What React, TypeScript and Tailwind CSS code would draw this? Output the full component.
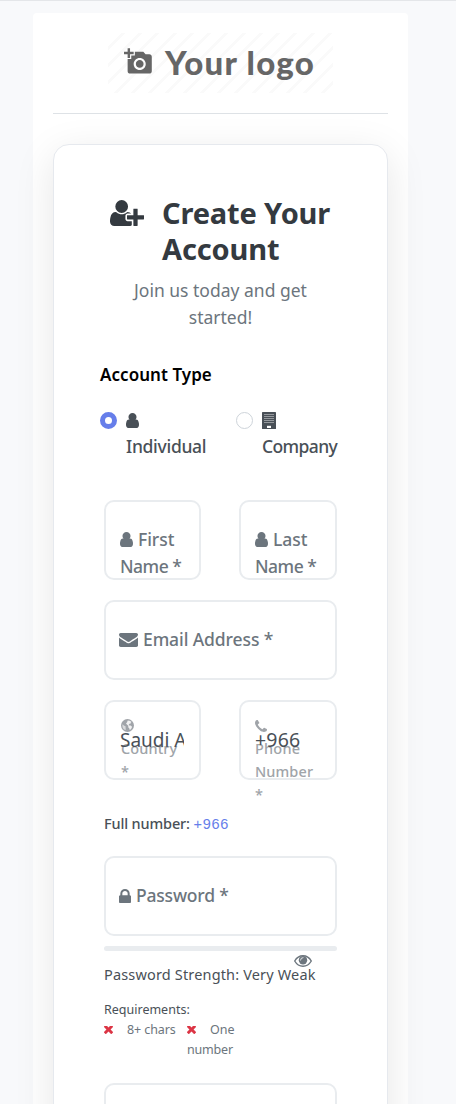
import type { ReactNode } from "react";
import { MdAddAPhoto } from "react-icons/md";

const PATHS = {
  user: "M1536 1330q0 140-62.5 237t-150.5 97h-854q-88 0-150.5-97t-62.5-237q0-60 8.5-140t31.5-152 58.5-131 94-89 120-24q140 112 327 112t327-112q62 0 120 24t94 89 58.5 131 31.5 152 8.5 140zm-242-800q0 168-116.5 284.5t-281.5 116.5-281.5-116.5-116.5-284.5 116.5-285 281.5-117 281.5 117 116.5 285z",
  userPlus:
    "M704 896q-159 0-271.5-112.5t-112.5-271.5 112.5-271.5 271.5-112.5 271.5 112.5 112.5 271.5-112.5 271.5-271.5 112.5zm960 128h352q13 0 22.5 9.5t9.5 22.5v192q0 13-9.5 22.5t-22.5 9.5h-352v352q0 13-9.5 22.5t-22.5 9.5h-192q-13 0-22.5-9.5t-9.5-22.5v-352h-352q-13 0-22.5-9.5t-9.5-22.5v-192q0-13 9.5-22.5t22.5-9.5h352v-352q0-13 9.5-22.5t22.5-9.5h192q13 0 22.5 9.5t9.5 22.5v352zm-736 224q0 52 38 90t90 38h256v238q-68 50-171 50h-874q-121 0-194-69t-73-190q0-53 3.5-103.5t14-109 26.5-108.5 43-97.5 62-81 85.5-53.5 111.5-20q19 0 39 17 79 61 154.5 91.5t164.5 30.5 164.5-30.5 154.5-91.5q20-17 39-17 132 0 217 96h-223q-52 0-90 38t-38 90v192z",
  envelope:
    "M1792 710v794q0 66-47 113t-113 47h-1472q-66 0-113-47t-47-113v-794q44 49 101 87 362 246 497 345 57 42 92.5 65.5t94.5 48 110 24.5h2q51 0 110-24.5t94.5-48 92.5-65.5q170-123 498-345 57-39 100-87zm0-294q0 79-49 151t-122 123q-376 261-468 325-10 7-42.5 31t-54 38.5-52 32.5-57.5 27-50 9h-2q-23 0-50-9t-57.5-27-52-32.5-54-38.5-42.5-31q-91-64-262-182.5t-205-142.5q-62-42-117-115.5t-55-136.5q0-78 41.5-130t118.5-52h1472q65 0 112.5 47t47.5 113z",
  phone:
    "M1600 1240q0 27-10 70.5t-21 68.5q-21 50-122 106-94 51-186 51-27 0-53-3.5t-57.5-12.5-47-14.5-55.5-20.5-49-18q-98-35-175-83-127-79-264-216t-216-264q-48-77-83-175-3-9-18-49t-20.5-55.5-14.5-47-12.5-57.5-3.5-53q0-92 51-186 56-101 106-122 25-11 68.5-21t70.5-10q14 0 21 3 18 6 53 76 11 19 30 54t35 63.5 31 53.5q3 4 17.5 25t21.5 35.5 7 28.5q0 20-28.5 50t-62 55-62 53-28.5 46q0 9 5 22.5t8.5 20.5 14 24 11.5 19q76 137 174 235t235 174q2 1 19 11.5t24 14 20.5 8.5 22.5 5q18 0 46-28.5t53-62 55-62 50-28.5q14 0 28.5 7t35.5 21.5 25 17.5q25 15 53.5 31t63.5 35 54 30q70 35 76 53 3 7 3 21z",
  lock: "M640 768h512v-192q0-106-75-181t-181-75-181 75-75 181v192zm832 96v576q0 40-28 68t-68 28h-960q-40 0-68-28t-28-68v-576q0-40 28-68t68-28h32v-192q0-184 132-316t316-132 316 132 132 316v192h32q40 0 68 28t28 68z",
  eye: "M1664 960q-152-236-381-353 61 104 61 225 0 185-131.5 316.5t-316.5 131.5-316.5-131.5-131.5-316.5q0-121 61-225-229 117-381 353 133 205 333.5 326.5t434.5 121.5 434.5-121.5 333.5-326.5zm-720-384q0-20-14-34t-34-14q-125 0-214.5 89.5t-89.5 214.5q0 20 14 34t34 14 34-14 14-34q0-86 61-147t147-61q20 0 34-14t14-34zm848 384q0 34-20 69-140 230-376.5 368.5t-499.5 138.5-499.5-139-376.5-368q-20-35-20-69t20-69q140-229 376.5-368t499.5-139 499.5 139 376.5 368q20 35 20 69z",
  times:
    "M1490 1322q0 40-28 68l-136 136q-28 28-68 28t-68-28l-294-294-294 294q-28 28-68 28t-68-28l-136-136q-28-28-28-68t28-68l294-294-294-294q-28-28-28-68t28-68l136-136q28-28 68-28t68 28l294 294 294-294q28-28 68-28t68 28l136 136q28 28 28 68t-28 68l-294 294 294 294q28 28 28 68z",
};

function Glyph({ name, box, className }: { name: keyof typeof PATHS; box: string; className: string }) {
  return (
    <svg viewBox={box} preserveAspectRatio="none" className={`shrink-0 ${className}`} fill="currentColor" aria-hidden="true">
      <path d={PATHS[name]} />
    </svg>
  );
}

const USER_BOX = "256 128 1280 1536";

function Building() {
  const cols = [3, 5, 7, 9, 11];
  const rows = [2.5, 4.5, 6.5, 8.5, 10.5];
  return (
    <svg viewBox="0 0 14 17" className="h-[17px] w-[14px]" aria-hidden="true">
      <rect width="14" height="17" rx="0.6" fill="currentColor" />
      {rows.map((y) => cols.map((x) => <rect key={`${x}-${y}`} x={x - 0.5} y={y - 0.5} width="1" height="1" fill="#fff" fillOpacity="0.85" />))}
      <rect x="5" y="13.8" width="4" height="2.2" fill="#fff" />
    </svg>
  );
}

function Globe() {
  return (
    <svg viewBox="0 0 14 14" className="h-[13px] w-[13px]" aria-hidden="true">
      <circle cx="7" cy="7" r="7" fill="currentColor" />
      <path d="M7.2 1.5l2.2.3 2 1.3-1 .6.4.9-1.6.6-.9 1 .5.9 1.6-.1 1.5 1.3-.5 1.6-1.4 1.6-.8.2-.2-1.6-1.2-1.3.1-1.5L6.4 6l-1-1.2 1.2-1.3z" fill="#fff" fillOpacity="0.85" />
      <path d="M1.6 5.6l1.5 1.3 2 1.1-.2 1.5.3 1.8-.8.6A6 6 0 0 1 1.6 5.6z" fill="#fff" fillOpacity="0.6" />
    </svg>
  );
}

function Field({ className = "", children }: { className?: string; children?: ReactNode }) {
  return <div className={`relative h-20 rounded-[10px] border-2 border-[#e9ecef] bg-white ${className}`}>{children}</div>;
}

function NameField({ first, second, className }: { first: string; second: string; className: string }) {
  return (
    <Field className={`pt-6 pl-3.5 text-[17.5px] leading-[27px] font-medium whitespace-nowrap text-[#6c757d] ${className}`}>
      <div className="flex items-center">
        <Glyph name="user" box={USER_BOX} className="mr-[5px] h-[15px] w-[13px]" />
        <span className="tracking-[-0.05px]">{first}</span>
      </div>
      <div className="tracking-[-0.5px]">{second}</div>
    </Field>
  );
}

export default function App() {
  return (
    <div className="h-[1104px] overflow-hidden border-t border-[#e4e6e9] bg-[#f8f9fb] pt-3 pl-[33px] font-['Noto_Sans','Open_Sans',sans-serif]">
      <main className="h-[1120px] w-[375px] rounded-t bg-white p-5">
        <header className="flex h-[81px] items-start justify-center border-b border-[#dee2e6]">
          <div className="flex h-[60px] w-[225px] items-center bg-[repeating-linear-gradient(135deg,#fff_0px,#fff_9.5px,#fafafa_9.5px,#fafafa_12.2px)] pl-4 text-[#666]">
            <MdAddAPhoto className="-mt-[3px] size-[29px]" />
            <span className="ml-3 -mt-0.5 text-[33px] leading-[60px] font-black tracking-[1.25px] whitespace-nowrap font-['Lato',sans-serif]">
              Your logo
            </span>
          </div>
        </header>

        <section className="mt-[30px] h-[1000px] rounded-2xl border border-[#e6e9ee] bg-white pt-[50px] shadow-[0_10px_40px_rgba(0,0,0,0.1)]">
          <div className="flex pl-14">
            <Glyph name="userPlus" box="0 128 2048 1536" className="mt-[5px] h-[26px] w-[34px] text-[#343a40]" />
            <h1 className="ml-[18px] text-[29px] leading-9 font-bold tracking-[-0.15px] whitespace-nowrap text-[#343a40]">
              Create Your
              <br />
              Account
            </h1>
          </div>
          <p className="mt-2.5 text-center text-[17.5px] leading-[27px] whitespace-nowrap text-[#6c757d]">
            Join us today and get
            <br />
            started!
          </p>

          <h2 className="mt-[30px] ml-[46px] text-[17px] leading-[27px] font-semibold tracking-[0.05px] text-black">Account Type</h2>
          <div className="mt-[19px] ml-[46px] flex text-[17.5px] leading-[26px] font-medium text-[#495057]">
            <div className="flex w-[136px]">
              <span className="mt-[5px] size-[17px] rounded-full border-[5px] border-[#667eea] bg-white" />
              <div className="ml-[9px]">
                <div className="flex h-[26px] items-center">
                  <Glyph name="user" box={USER_BOX} className="h-[15px] w-[13px]" />
                </div>
                <div className="tracking-[-0.3px]">Individual</div>
              </div>
            </div>
            <div className="flex">
              <span className="mt-[5px] size-[17px] rounded-full border border-[#ced4da] bg-white" />
              <div className="ml-[9px]">
                <div className="flex h-[26px] items-center">
                  <Building />
                </div>
                <div className="tracking-[-0.6px]">Company</div>
              </div>
            </div>
          </div>

          <div className="mt-[41px] ml-[50px] w-[233px]">
            <div className="flex justify-between">
              <NameField first="First" second="Name *" className="w-[97px]" />
              <NameField first="Last" second="Name *" className="w-[98px]" />
            </div>

            <Field className="mt-5 flex items-center pl-[13px] text-[17.5px] font-medium text-[#6c757d]">
              <Glyph name="envelope" box="0 256 1792 1408" className="h-[14px] w-[19px]" />
              <span className="-mt-0.5 ml-[5px] tracking-[-0.1px] whitespace-nowrap">Email Address *</span>
            </Field>

            <div className="mt-5 flex justify-between">
              <Field className="w-[97px]">
                <div className="absolute top-3 left-[15px] text-[14.5px] leading-[23px] font-medium text-[#a0a4a9]">
                  <div className="flex h-[23px] items-center">
                    <Globe />
                  </div>
                  <div className="tracking-[0.1px]">Country</div>
                  <div>*</div>
                </div>
                <div className="relative mt-6 ml-[14px] w-[64px] overflow-hidden text-[19px] leading-7 whitespace-nowrap text-[#495057]">
                  Saudi Arabia
                </div>
              </Field>
              <Field className="w-[98px]">
                <div className="absolute top-3 left-[14px] text-[14.5px] leading-[23px] font-medium text-[#a0a4a9]">
                  <div className="flex h-[23px] items-center">
                    <Glyph name="phone" box="192 128 1408 1408" className="size-3" />
                  </div>
                  <div className="tracking-[0.2px]">Phone</div>
                  <div className="tracking-[0.1px]">Number</div>
                  <div>*</div>
                </div>
                <div className="relative mt-6 ml-[14px] text-[19.5px] leading-7 tracking-[0.2px] whitespace-nowrap text-[#495057]">+966</div>
              </Field>
            </div>

            <p className="mt-[31px] text-[14.5px] leading-6 font-medium tracking-[-0.15px] whitespace-nowrap text-[#495057]">
              Full number:{" "}
              <span className="font-normal tracking-[0.7px] text-[#667eea] font-['Liberation_Sans',sans-serif]">+966</span>
            </p>

            <Field className="mt-5 flex items-center pl-[13px] text-[17.5px] font-medium text-[#6c757d]">
              <Glyph name="lock" box="320 128 1152 1408" className="h-[14px] w-[12px]" />
              <span className="-mt-0.5 ml-[5px] tracking-[-0.2px] whitespace-nowrap">Password *</span>
            </Field>

            <div className="relative mt-[10px] h-[5px] rounded-[3px] bg-[#e9ecef]">
              <svg viewBox="0 0 18 12" className="absolute top-[9px] left-[190px] h-3 w-[18px] text-[#6c757d]" aria-hidden="true">
                <path d="M.7 6C2.7 2.6 5.7.8 9 .8S15.300 2.600 17.300 6C15.300 9.400 12.300 11.200 9 11.200S2.700 9.400.7 6z" fill="none" stroke="currentColor" strokeWidth="1.4" />
                <circle cx="9" cy="5.200" r="4.200" fill="currentColor" />
                <path d="M6.500 5.100A2.500 2.500 0 0 1 9 2.600" fill="none" stroke="#fff" strokeWidth="0.8" strokeLinecap="round" />
              </svg>
            </div>
            <p className="mt-3 text-[14.5px] leading-[23px] tracking-[0.16px] whitespace-nowrap text-[#495057]">
              Password Strength: Very Weak
            </p>

            <div className="mt-[14px] text-[12.5px] leading-5 whitespace-nowrap text-[#495057]">
              <p>Requirements:</p>
              <div className="flex text-[#6c757d]">
                <div className="flex h-5 w-[83px] items-center">
                  <Glyph name="times" box="302 502 1188 1052" className="h-2 w-[9px] text-[#dc3545]" />
                  <span className="ml-[14px] tracking-[-0.1px]">8+ chars</span>
                </div>
                <div>
                  <div className="flex h-5 items-center">
                    <Glyph name="times" box="302 502 1188 1052" className="h-2 w-[9px] text-[#dc3545]" />
                    <span className="ml-[14px]">One</span>
                  </div>
                  <p className="tracking-[-0.2px]">number</p>
                </div>
              </div>
            </div>

            <Field className="mt-[23px]" />
          </div>
        </section>
      </main>
    </div>
  );
}
